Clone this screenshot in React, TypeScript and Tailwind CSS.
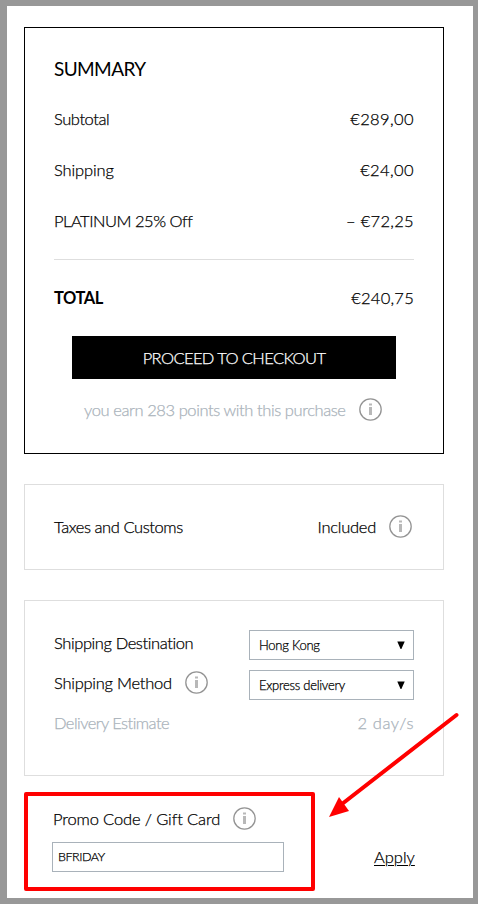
import React from "react";

function InfoIcon({ className = "" }: { className?: string }) {
  return (
    <svg className={`h-[23px] w-[23px] shrink-0 ${className}`} viewBox="0 0 23 23" fill="none">
      <circle cx="11.5" cy="11.5" r="10.7" stroke="#949494" strokeWidth="1.3" />
      <rect x="10" y="5.5" width="3" height="2" fill="#b8b8b8" />
      <rect x="10" y="9" width="3" height="8" fill="#b8b8b8" />
    </svg>
  );
}

function Row({ label, value, labelClass, valueClass }: { label: string; value: string; labelClass: string; valueClass: string }) {
  return (
    <div className="flex h-[51px] items-center justify-between pb-[2px]">
      <span className={labelClass}>{label}</span>
      <span className={valueClass}>{value}</span>
    </div>
  );
}

function Select({ value, textClass }: { value: string; textClass: string }) {
  return (
    <div className="flex h-[30px] w-[165px] items-center justify-between border border-[#a9b2ba] pr-[8px] pl-[9px] text-[13px]">
      <span className={textClass}>{value}</span>
      <svg className="h-[8px] w-[8px]" viewBox="0 0 8 8">
        <path d="M0.3 0.5H7.7L4.4 8H3.6Z" fill="#000" />
      </svg>
    </div>
  );
}

export default function App() {
  return (
    <div className="relative h-[904px] w-[478px] overflow-hidden bg-[#989898] pt-[6px] pl-[7px] font-['Lato',sans-serif] text-[16.5px] leading-[24px] font-light whitespace-nowrap text-black [-webkit-text-stroke:0.25px]">
      <main className="h-[892px] w-[466px] bg-white px-[17px] pt-[21px]">
        <section className="h-[427px] w-[420px] border border-black px-[29px] pt-[26px]">
          <h1 className="flex h-8 items-center pb-[2px] text-[19px] font-normal tracking-[-0.6px] [-webkit-text-stroke:0px]">SUMMARY</h1>
          <div className="mt-[8px]">
            <Row label="Subtotal" value="€289,00" labelClass="tracking-[-0.43px]" valueClass="tracking-[0.4px]" />
            <Row label="Shipping" value="€24,00" labelClass="tracking-[-0.12px]" valueClass="tracking-[0.4px]" />
            <Row label="PLATINUM 25% Off" value="– €72,25" labelClass="tracking-[-0.48px]" valueClass="tracking-[0.3px]" />
          </div>
          <div className="mt-[12px] mb-[13px] h-px bg-[#dedede]" />
          <Row label="TOTAL" value="€240,75" labelClass="pt-px font-bold tracking-[-0.5px] [-webkit-text-stroke:0px]" valueClass="tracking-[0.25px]" />
          <button className="mt-[12px] ml-[18px] flex h-[43px] w-[324px] items-center justify-center bg-black text-white">
            <span className="tracking-[-0.6px]">PROCEED TO CHECKOUT</span>
          </button>
          <div className="mt-[18px] ml-[30px] flex h-6 items-center text-[#a9b2ba]">
            <span className="w-[275px] pt-px tracking-[-0.41px]">you earn 283 points with this purchase</span>
            <InfoIcon />
          </div>
        </section>

        <section className="mt-[30px] flex h-[86px] w-[420px] items-center border border-[#dedede] pr-[31px] pl-[29px]">
          <span className="tracking-[-0.42px]">Taxes and Customs</span>
          <span className="ml-auto tracking-[-0.25px]">Included</span>
          <InfoIcon className="mb-px ml-[13px]" />
        </section>

        <section className="mt-[30px] h-[176px] w-[420px] border border-[#dedede] px-[29px] pt-[24px]">
          <div className="flex h-10 items-center justify-between">
            <span className="pb-[4px] tracking-[-0.4px]">Shipping Destination</span>
            <Select value="Hong Kong" textClass="tracking-[-0.25px]" />
          </div>
          <div className="flex h-10 items-center">
            <span className="w-[131px] pb-[4px] tracking-[-0.25px]">Shipping Method</span>
            <InfoIcon className="mb-[5px]" />
            <div className="ml-auto">
              <Select value="Express delivery" textClass="tracking-[-0.27px]" />
            </div>
          </div>
          <div className="flex h-10 items-center justify-between pb-[4px] text-[#a9b2ba]">
            <span className="tracking-[-0.55px]">Delivery Estimate</span>
            <span className="tracking-[0.6px]">2 day/s</span>
          </div>
        </section>

        <section className="mt-[16px] flex items-start">
          <div className="h-[99px] w-[291px] rounded-[2px] border-4 border-[#ff0000] pt-[10px] pl-[24px]">
            <div className="flex h-6 items-center">
              <span className="w-[181px] pt-[2px] pl-px tracking-[-0.13px]">Promo Code / Gift Card</span>
              <InfoIcon />
            </div>
            <div className="mt-[12px] flex h-[30px] w-[232px] items-center border border-[#a9b2ba] pl-[5px] text-[12.5px]">
              <span className="tracking-[-0.45px]">BFRIDAY</span>
            </div>
          </div>
          <a className="mt-[53px] ml-[59px] tracking-[0px] underline decoration-1 underline-offset-2">Apply</a>
        </section>
      </main>

      <svg className="pointer-events-none absolute top-[700px] left-[320px] h-[125px] w-[145px]" viewBox="0 0 145 125">
        <path d="M136.5 15L22 104" stroke="#f00" strokeWidth="4" strokeLinecap="round" />
        <path d="M9 117L19 97L29 111Z" fill="#f00" />
      </svg>
    </div>
  );
}
